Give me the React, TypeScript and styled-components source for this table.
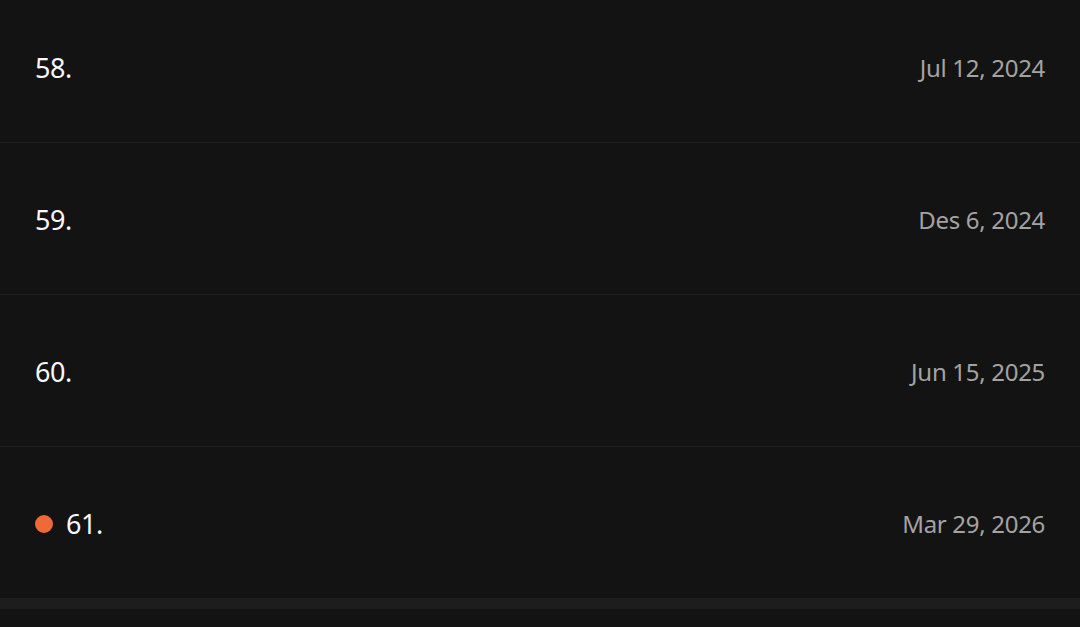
import React from 'react';
import styled, { createGlobalStyle } from 'styled-components';

const GlobalStyle = createGlobalStyle`
  html, body {
    margin: 0;
    padding: 0;
    background: #131313;
    overflow: hidden;
  }
  body {
    font-family: "Noto Sans", "Open Sans", sans-serif;
  }
`;

const Page = styled.div`
  margin-top: -9px;
  background: #131313;
`;

const List = styled.ul`
  list-style-type: none;
  margin: 0;
  padding: 0;
`;

const Row = styled.li`
  height: 149px;
  padding: 2px 35px 0;
  display: flex;
  align-items: center;
  justify-content: space-between;
  border-bottom: 1px solid #202020;

  &:last-child {
    border-bottom: none;
  }
`;

const Left = styled.div`
  display: flex;
  align-items: center;
  gap: 13px;
`;

const Dot = styled.span`
  width: 18px;
  height: 18px;
  border-radius: 50%;
  background: #f06a38;
`;

const Number = styled.span`
  font-size: 27px;
  color: #f7f7f7;
  letter-spacing: -0.5px;
`;

const DateText = styled.span`
  font-size: 24px;
  color: #a3a3a3;
  letter-spacing: -0.3px;
`;

const Band = styled.div`
  height: 11px;
  background: #1d1d1d;
`;

interface IEntry {
  num: number;
  date: string;
  unread?: boolean;
}

const entries: IEntry[] = [
  { num: 58, date: 'Jul 12, 2024' },
  { num: 59, date: 'Des 6, 2024' },
  { num: 60, date: 'Jun 15, 2025' },
  { num: 61, date: 'Mar 29, 2026', unread: true },
];

const App = () => {
  return (
    <>
      <GlobalStyle />
      <Page>
        <List>
          {entries.map((entry) => (
            <Row key={entry.num}>
              <Left>
                {entry.unread && <Dot />}
                <Number>{entry.num}.</Number>
              </Left>
              <DateText>{entry.date}</DateText>
            </Row>
          ))}
        </List>
        <Band />
      </Page>
    </>
  );
};

export default App;
